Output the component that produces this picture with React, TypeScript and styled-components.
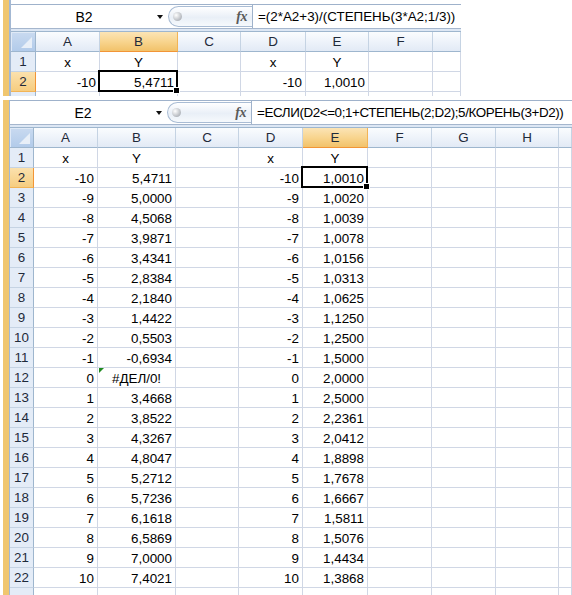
import React from "react";
import styled, { createGlobalStyle, css } from "styled-components";

const Global = createGlobalStyle`
  html, body { margin: 0; padding: 0; background: #fff; }
  body { font-family: "Liberation Sans", Arial, sans-serif; font-size: 13px; color: #000; }
`;

const Page = styled.div`
  width: 572px;
  height: 595px;
  overflow: hidden;
  display: flex;
  flex-direction: column;
  gap: 4px;
  background: #fff;
`;

const Panel = styled.div<{ $w: number; $h: number }>`
  display: flex;
  width: ${(p) => p.$w}px;
  height: ${(p) => p.$h}px;
  flex: none;
  overflow: hidden;
`;

const GoldBar = styled.div`
  width: 6px;
  margin-left: 3px;
  flex: none;
  background: #f0c66f;
`;

const Sheet = styled.div<{ $edge: number; $pad: number }>`
  flex: 1;
  min-width: 0;
  display: flex;
  flex-direction: column;
  border-left: ${(p) => p.$edge}px solid #a3b8d3;
  padding-top: ${(p) => p.$pad}px;
  overflow: hidden;
`;

const FormulaBar = styled.div`
  display: flex;
  align-items: stretch;
  height: 24px;
  flex: none;
  box-sizing: border-box;
  border-top: 1px solid #9fb2cb;
  background: #fff;
`;

const NameBox = styled.div`
  width: 157px;
  flex: none;
  display: flex;
  align-items: center;
`;

const NameText = styled.span`
  flex: 1;
  text-align: center;
  font-size: 14px;
`;

const DropArrow = styled.span`
  width: 0;
  height: 0;
  margin-right: 5px;
  border-left: 3px solid transparent;
  border-right: 3px solid transparent;
  border-top: 4px solid #111;
`;

const Capsule = styled.div`
  width: 84px;
  flex: none;
  box-sizing: border-box;
  display: flex;
  align-items: center;
  justify-content: space-between;
  border: 1px solid #a9bcd4;
  border-right: none;
  border-radius: 12px 0 0 12px;
  background: linear-gradient(#ffffff, #e9eff7 55%, #f6f9fc);
  padding: 0 5px 0 4px;
  margin: 1px 0;
`;

const Knob = styled.span`
  width: 9px;
  height: 9px;
  border-radius: 50%;
  background: radial-gradient(circle at 35% 35%, #ffffff, #b4b8be 70%, #9ea3aa);
`;

const Fx = styled.span`
  font-family: "Liberation Serif", "Times New Roman", serif;
  font-style: italic;
  font-weight: bold;
  font-size: 14px;
  color: #5a5a5a;
  letter-spacing: -0.5px;
`;

const FormulaText = styled.div<{ $spacing: number }>`
  flex: 1;
  border-left: 1px solid #9fb2cb;
  padding-left: 5px;
  display: flex;
  align-items: center;
  white-space: nowrap;
  font-size: 13.4px;
  letter-spacing: ${(p) => p.$spacing}px;
  overflow: hidden;
`;

const Separator = styled.div`
  height: 4px;
  flex: none;
  box-sizing: border-box;
  border-top: 1px solid #a5b6cd;
  border-bottom: 1px solid #9eb6ce;
  background: #dde7f4;
`;

const Grid = styled.div<{ $cols: string }>`
  display: grid;
  grid-template-columns: ${(p) => p.$cols};
  grid-auto-rows: 20px;
  flex: none;
`;

const headerBase = css`
  box-sizing: border-box;
  display: flex;
  align-items: center;
  justify-content: center;
  font-size: 13.4px;
  color: #1f2a3a;
  overflow: hidden;
  white-space: nowrap;
`;

const Corner = styled.div`
  ${headerBase};
  position: relative;
  background: linear-gradient(#c9daf0, #b2cbea);
  border-right: 1px solid #9eb6ce;
  border-bottom: 1px solid #9eb6ce;
  box-shadow: inset 1px 1px 0 #dfe9f6;
`;

const CornerTri = styled.svg`
  position: absolute;
  right: 3px;
  bottom: 3px;
`;

const ColHeader = styled.div<{ $active?: boolean }>`
  ${headerBase};
  border-right: 1px solid ${(p) => (p.$active ? "#f2b456" : "#c5d3e3")};
  border-bottom: 1px solid ${(p) => (p.$active ? "#f29536" : "#9eb6ce")};
  background: ${(p) =>
    p.$active
      ? "linear-gradient(#fbe4b6, #f8d58f 50%, #f2c26a)"
      : "linear-gradient(#fafcfe, #eef3fa 50%, #e2eaf5)"};
`;

const RowHeader = styled.div<{ $active?: boolean }>`
  ${headerBase};
  border-right: 1px solid ${(p) => (p.$active ? "#f29536" : "#9eb6ce")};
  border-bottom: 1px solid ${(p) => (p.$active ? "#f2b456" : "#c5d3e3")};
  background: ${(p) =>
    p.$active ? "linear-gradient(#fbe1ad, #f6cd80)" : "#e4ecf7"};
`;

const Cell = styled.div<{ $align: "left" | "right" | "center"; $active?: boolean }>`
  box-sizing: border-box;
  position: relative;
  border-right: 1px solid #d0d7e5;
  border-bottom: 1px solid #d0d7e5;
  padding: 2px 3px 0 3px;
  line-height: 18px;
  font-size: 13.4px;
  text-align: ${(p) => p.$align};
  white-space: nowrap;
  ${(p) =>
    p.$active &&
    css`
      z-index: 2;
      &::before {
        content: "";
        position: absolute;
        left: -2px;
        top: -2px;
        right: -1px;
        bottom: -1px;
        border: 2px solid #000;
      }
      &::after {
        content: "";
        position: absolute;
        right: -3px;
        bottom: -3px;
        width: 5px;
        height: 5px;
        background: #000;
        border: 1px solid #fff;
      }
    `}
`;

const ErrMark = styled.span`
  position: absolute;
  left: 1px;
  top: 0;
  width: 0;
  height: 0;
  border-top: 5px solid #1f8a1f;
  border-right: 5px solid transparent;
`;

type CellData = { v: string; align: "left" | "right" | "center" };

const n = (v: string): CellData => ({ v, align: "right" });
const c = (v: string): CellData => ({ v, align: "center" });
const E: CellData = { v: "", align: "left" };

const bValues = [
  "5,4711", "5,0000", "4,5068", "3,9871", "3,4341", "2,8384", "2,1840", "1,4422",
  "0,5503", "-0,6934", "#ДЕЛ/0!", "3,4668", "3,8522", "4,3267", "4,8047", "5,2712",
  "5,7236", "6,1618", "6,5869", "7,0000", "7,4021",
];
const eValues = [
  "1,0010", "1,0020", "1,0039", "1,0078", "1,0156", "1,0313", "1,0625", "1,1250",
  "1,2500", "1,5000", "2,0000", "2,5000", "2,2361", "2,0412", "1,8898", "1,7678",
  "1,6667", "1,5811", "1,5076", "1,4434", "1,3868",
];

type SheetProps = {
  name: string;
  formula: string;
  spacing: number;
  cols: string;
  labels: string[];
  activeCol: number;
  activeRow: number;
  rows: CellData[][];
  edge: number;
  pad: number;
  errAt?: [number, number];
};

function SheetView(p: SheetProps) {
  return (
    <Sheet $edge={p.edge} $pad={p.pad}>
      <FormulaBar>
        <NameBox>
          <NameText>{p.name}</NameText>
          <DropArrow />
        </NameBox>
        <Capsule>
          <Knob />
          <Fx>fx</Fx>
        </Capsule>
        <FormulaText $spacing={p.spacing}>{p.formula}</FormulaText>
      </FormulaBar>
      <Separator />
      <Grid $cols={p.cols}>
        <Corner>
          <CornerTri width="11" height="11" viewBox="0 0 11 11">
            <polygon points="11,0 11,11 0,11" fill="#e8eff8" />
          </CornerTri>
        </Corner>
        {p.labels.map((l, i) => (
          <ColHeader key={"h" + i} $active={i === p.activeCol}>
            {l}
          </ColHeader>
        ))}
        {p.rows.map((row, r) => (
          <React.Fragment key={"r" + r}>
            <RowHeader $active={r + 1 === p.activeRow}>
              {r < p.rows.length - 1 ? r + 1 : ""}
            </RowHeader>
            {row.map((cell, ci) => (
              <Cell
                key={ci}
                $align={cell.align}
                $active={r + 1 === p.activeRow && ci === p.activeCol}
              >
                {p.errAt && p.errAt[0] === r + 1 && p.errAt[1] === ci && <ErrMark />}
                {cell.v}
              </Cell>
            ))}
          </React.Fragment>
        ))}
      </Grid>
    </Sheet>
  );
}

const topRows: CellData[][] = [
  [c("x"), c("Y"), E, c("x"), c("Y"), E, E],
  [n("-10"), n("5,4711"), E, n("-10"), n("1,0010"), E, E],
  [E, E, E, E, E, E, E],
];

const bottomRows: CellData[][] = [
  [c("x"), c("Y"), E, c("x"), c("Y"), E, E, E, E],
  ...bValues.map((b, i) => {
    const x = String(i - 10);
    return [
      n(x),
      b.startsWith("#") ? c(b) : n(b),
      E,
      n(x),
      n(eValues[i]),
      E,
      E,
      E,
      E,
    ];
  }),
  [E, E, E, E, E, E, E, E, E],
];

export default function App() {
  return (
    <>
      <Global />
      <Page>
        <Panel $w={461} $h={96}>
          <GoldBar />
          <SheetView
            name="B2"
            formula="=(2*A2+3)/(СТЕПЕНЬ(3*A2;1/3))"
            spacing={0}
            cols="25px 64px 78px 63px 65px 63px 64px 28px"
            labels={["A", "B", "C", "D", "E", "F", ""]}
            activeCol={1}
            activeRow={2}
            rows={topRows}
            edge={2}
            pad={4}
          />
        </Panel>
        <Panel $w={572} $h={495}>
          <GoldBar />
          <SheetView
            name="E2"
            formula="=ЕСЛИ(D2<=0;1+СТЕПЕНЬ(2;D2);5/КОРЕНЬ(3+D2))"
            spacing={-0.4}
            cols="24px 64px 78px 63px 64px 65px 64px 64px 63px 13px"
            labels={["A", "B", "C", "D", "E", "F", "G", "H", ""]}
            activeCol={4}
            activeRow={2}
            rows={bottomRows}
            edge={1}
            pad={0}
            errAt={[12, 1]}
          />
        </Panel>
      </Page>
    </>
  );
}
